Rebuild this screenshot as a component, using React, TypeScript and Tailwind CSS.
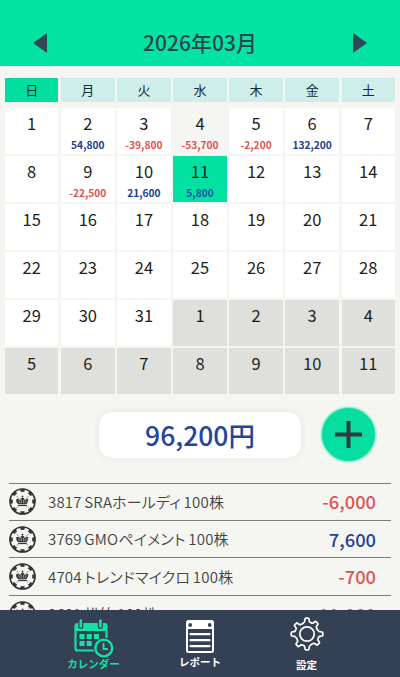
import clsx from "clsx";

interface Day {
  day: number;
  amount?: number;
  state?: "today" | "marked" | "outside";
}

interface Trade {
  name: string;
  amount: number;
}

const weekdays = ["日", "月", "火", "水", "木", "金", "土"];

const amounts: Record<number, number> = {
  2: 54800,
  3: -39800,
  4: -53700,
  5: -2200,
  6: 132200,
  9: -22500,
  10: 21600,
  11: 5800,
};

const days: Day[] = Array.from({ length: 42 }, (_, i) => {
  if (i >= 31) return { day: i - 30, state: "outside" };
  const day = i + 1;
  return {
    day,
    amount: amounts[day],
    state: day === 11 ? "today" : day === 4 ? "marked" : undefined,
  };
});

const trades: Trade[] = [
  { name: "3817 SRAホールディ 100株", amount: -6000 },
  { name: "3769 GMOペイメント 100株", amount: 7600 },
  { name: "4704 トレンドマイクロ 100株", amount: -700 },
  { name: "9601 松竹 100株", amount: -11000 },
];

const format = (n: number) => n.toLocaleString("en-US");

function ChipIcon() {
  return (
    <svg viewBox="0 0 54 54" className="size-[27px] shrink-0" fill="none" stroke="#333638">
      <circle cx="27" cy="27" r="25" strokeWidth="3.4" />
      <circle
        cx="27"
        cy="27"
        r="22.5"
        strokeWidth="6"
        pathLength="80"
        strokeDasharray="5 5"
        strokeDashoffset="2.5"
      />
      <path d="M14.5 15.5l6 6M39.5 15.5l-6 6M15 39l5-4M39 39l-5-4" strokeWidth="1" />
      {/* crown */}
      <path
        d="M19 32.5C13 28 13 22 17 21.5q4 0 5.500 3.500 0-5 4.500-6 4.500 1 4.500 6 1.500-3.500 5.500-3.500 4 .5-2 11z"
        fill="#333638"
        stroke="none"
      />
      <path d="M19 24.5l3 6M24.8 23.5v7M29.2 23.5v7M35 24.5l-3 6" stroke="#f5f7f1" strokeWidth="1" />
      <path d="M18.5 35h17" strokeWidth="2.4" />
      <path d="M27 15v5M25 17h4" strokeWidth="1.5" />
    </svg>
  );
}

function CalendarIcon() {
  return (
    <svg viewBox="0 0 40 39" className="h-[39px] w-10" fill="none" stroke="#13e2a8">
      <path d="M20 31.5H3.5a2 2 0 0 1-2-2V7a2 2 0 0 1 2-2h27a2 2 0 0 1 2 2v12" strokeWidth="2.2" />
      <path d="M2 6h30v6H2z" fill="#13e2a8" stroke="none" />
      <path d="M6.8 1v6.5M26.4 1v6.5" stroke="#344054" strokeWidth="5" strokeLinecap="round" />
      <path d="M6.8 1.5v6M26.4 1.5v6" strokeWidth="2.6" strokeLinecap="round" />
      <path
        d="M5.5 15h5v5h-5zM12.7 15h5v5h-5zM20 15h5v5h-5zM5.5 22h5v5h-5zM12.7 22h5v5h-5z"
        fill="#13e2a8"
        stroke="none"
      />
      <circle cx="29.8" cy="29" r="10.4" fill="#344054" stroke="none" />
      <circle cx="29.8" cy="29" r="8.4" strokeWidth="2.4" />
      <path d="M29.5 24v6H34" strokeWidth="1.9" />
    </svg>
  );
}

function ReportIcon() {
  return (
    <svg viewBox="0 0 28 33" className="h-[33px] w-7" fill="none" stroke="#fff">
      <rect x="1" y="1" width="26" height="31" rx="1.5" strokeWidth="2" />
      <path d="M1 1h26v8H1z" fill="#fff" stroke="none" />
      <circle cx="4.2" cy="5" r="1.9" fill="#344054" stroke="none" />
      <circle cx="23.7" cy="5" r="1.9" fill="#344054" stroke="none" />
      <path d="M4.5 14.2h19M4.5 20.2h19M4.5 26.2h19" strokeWidth="2.2" strokeLinecap="round" />
    </svg>
  );
}

function GearIcon() {
  return (
    <svg viewBox="0 0 34 34" className="size-[34px]" fill="none" stroke="#fff" strokeWidth="1.7" strokeLinejoin="round">
      {/* eight teeth around the hub, one quarter turned four times */}
      {[0, 90, 180, 270].map((angle) => (
        <path
          key={angle}
          transform={`rotate(${angle} 17 17)`}
          d="M14 5.200q.6-.3.700-1L15 2q.1-.8.900-.8h2.200q.8 0 .9.800l.3 2.200q.1.700.700 1l2 .9q.7.200 1.200-.1l1.700-1.300q.7-.5 1.200 0l1.600 1.600q.6.600.1 1.200L26.500 9.300q-.4.500-.1 1.100l.8 2q.3.800 1.600 1.600"
        />
      ))}
      <circle cx="17" cy="17" r="7.2" />
    </svg>
  );
}

function DayCell({ day, amount, state }: Day) {
  return (
    <div
      className={clsx(
        "flex flex-col items-center",
        !state && "rounded-[2px] bg-white",
        state === "today" && "bg-[#02e0a2]",
        state === "marked" && "bg-[#f5f5f4]",
        state === "outside" && "bg-[#dfe0dc]"
      )}
    >
      <span className="mt-[3px] text-[16.5px] leading-[24px] text-[#1c1e20]">{day}</span>
      {amount !== undefined && (
        <span
          className={clsx(
            "mt-[2.5px] text-[10.2px] leading-[14px] font-bold",
            state === "today" ? "text-[#1658a4]" : amount < 0 ? "text-[#e05552]" : "text-[#213c94]"
          )}
        >
          {format(amount)}
        </span>
      )}
    </div>
  );
}

export default function App() {
  return (
    <div className="flex h-[677px] w-[400px] flex-col overflow-hidden bg-[#f5f6f1] font-['Noto_Sans_CJK_JP',sans-serif]">
      <header className="flex h-[66px] shrink-0 items-start justify-between bg-[#02e3a4] px-[33px] pt-[32px] text-[#294650]">
        <svg viewBox="0 0 14 20" className="mt-px h-5 w-[14px]" fill="#30475a">
          <path d="M14 0v20L0 10z" />
        </svg>
        <h1 className="text-[21px] leading-[21px] font-medium">2026年03月</h1>
        <svg viewBox="0 0 14 20" className="mt-px h-5 w-[14px]" fill="#30475a">
          <path d="M0 0v20l14-10z" />
        </svg>
      </header>

      <section className="shrink-0 px-[5px] pt-3">
        <div className="grid h-6 grid-cols-7 gap-x-[2.7px]">
          {weekdays.map((label, i) => (
            <div
              key={label}
              className={clsx(
                "flex items-center justify-center text-[13px] leading-6 text-[#102c34]",
                i === 0 ? "bg-[#02dda0]" : "bg-[#d0eee9]"
              )}
            >
              {label}
            </div>
          ))}
        </div>
        <div className="mt-[6.2px] grid h-[285.5px] grid-cols-7 grid-rows-6 gap-x-[2.7px] gap-y-[2.5px]">
          {days.map((d, i) => (
            <DayCell key={i} {...d} />
          ))}
        </div>
      </section>

      <section className="mt-[14px] flex h-[54px] shrink-0 items-center pl-[99px]">
        <div className="flex h-[46px] w-[202px] items-center justify-center rounded-[14px] bg-white text-[26.5px] leading-[46px] font-medium text-[#24459a] shadow-[0_0_7px_rgba(60,80,100,0.1)]">
          96,200円
        </div>
        <button className="ml-[21px] flex size-[53px] items-center justify-center rounded-full bg-[#08dda1] shadow-[0_0_2px_1px_#5ce8c0]">
          <svg viewBox="0 0 27 27" className="size-[27px]" stroke="#2c3c40" strokeWidth="4">
            <path d="M13.5 0v27M0 13.5h27" />
          </svg>
        </button>
      </section>

      <section className="mx-[9px] mt-[21px] min-h-0 flex-1 overflow-hidden">
        {trades.map((trade) => (
          <div key={trade.name} className="flex h-[37.4px] items-center border-t border-[#767b7e] pr-[15px]">
            <ChipIcon />
            <span className="ml-[12px] text-[15px] leading-5 font-[350] tracking-[0.2px] [word-spacing:-1px] text-[#414443] [font-feature-settings:'palt']">
              {trade.name}
            </span>
            <span
              className={clsx(
                "mb-px ml-auto text-[18.3px] leading-6 font-medium",
                trade.amount < 0 ? "text-[#dc5555]" : "text-[#24429a]"
              )}
            >
              {format(trade.amount)}
            </span>
          </div>
        ))}
      </section>

      <nav className="flex h-[67px] shrink-0 bg-[#344054] text-[10.5px] leading-[14px] font-bold text-white">
        <button className="ml-[40px] flex w-[107px] flex-col items-center pt-[9px] text-[#13e2a8]">
          <CalendarIcon />
          <span className="-mt-[1px]">カレンダー</span>
        </button>
        <button className="flex w-[106px] flex-col items-center pt-[10px]">
          <ReportIcon />
          <span className="mt-[2px]">レポート</span>
        </button>
        <button className="flex w-[107px] flex-col items-center pt-[7px]">
          <GearIcon />
          <span className="mt-[7px]">設定</span>
        </button>
      </nav>
    </div>
  );
}
